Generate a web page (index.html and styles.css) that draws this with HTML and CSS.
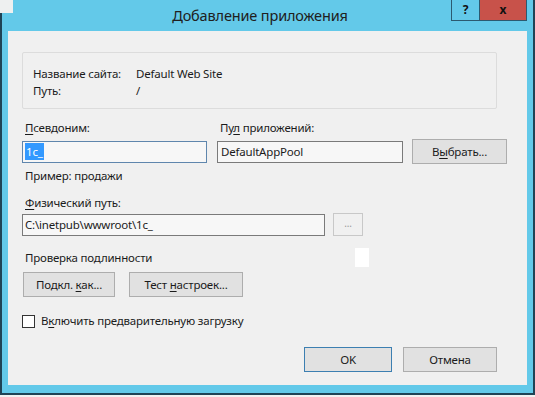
FILE: index.html
```html
<!DOCTYPE html>
<html lang="ru">
<head>
<meta charset="utf-8">
<title>Добавление приложения</title>
<link rel="stylesheet" href="styles.css">
</head>
<body>
<div class="window">
  <div class="titlebar">
    <div class="corner"></div>
    <div class="title">Добавление приложения</div>
    <div class="caption-btn help">?</div>
    <div class="caption-btn close">x</div>
  </div>
  <div class="client">
    <div class="group">
      <div class="g-label">Название сайта:</div><div class="g-value">Default Web Site</div>
      <div class="g-label">Путь:</div><div class="g-value">/</div>
    </div>

    <div class="row labels-row">
      <div class="label col-alias"><u>П</u>севдоним:</div>
      <div class="label col-pool">Пу<u>л</u> приложений:</div>
    </div>
    <div class="row inputs-row">
      <div class="input alias focused"><span class="sel">1c_</span></div>
      <div class="input pool">DefaultAppPool</div>
      <div class="btn choose">В<u>ы</u>брать...</div>
    </div>
    <div class="label example">Пример: продажи</div>

    <div class="label phys"><u>Ф</u>изический путь:</div>
    <div class="row path-row">
      <div class="input path">C:\inetpub\wwwroot\1c_</div>
      <div class="btn browse">...</div>
    </div>

    <div class="row auth-row">
      <div class="label auth">Проверка подлинности</div>
      <div class="blank"></div>
    </div>
    <div class="row auth-btns">
      <div class="btn connect">Подкл. <u>к</u>ак...</div>
      <div class="btn test">Тест <u>н</u>астроек...</div>
    </div>

    <div class="row check-row">
      <div class="checkbox"></div>
      <div class="check-label">В<u>к</u>лючить предварительную загрузку</div>
    </div>

    <div class="row footer">
      <div class="btn ok">OK</div>
      <div class="btn cancel">Отмена</div>
    </div>
  </div>
</div>
</body>
</html>
```

FILE: styles.css
```css
* { box-sizing: border-box; }
html, body { margin: 0; padding: 0; }
body {
  background: #f2f2f2;
  font-family: "Noto Sans", "Open Sans", sans-serif;
  font-size: 11.5px;
  letter-spacing: -0.2px;
  color: #1b1b1b;
  width: 535px;
  height: 397px;
  overflow: hidden;
}
u { text-decoration: underline; text-underline-offset: 2px; }

.window {
  width: 535px;
  height: 395px;
  background: #63c9e9;
  border: 2px solid #1f4355;
  border-top: none;
  padding: 0 6px 8px 6px;
  display: flex;
  flex-direction: column;
}

.titlebar {
  height: 31px;
  margin: 0 -6px;
  display: flex;
  align-items: flex-start;
  position: relative;
}
.corner {
  position: absolute;
  left: -2px;
  top: 0;
  width: 13px;
  height: 13px;
  background: #eef0f0;
}
.title {
  flex: 1;
  padding-left: 67px;
  text-align: center;
  font-size: 14.5px;
  letter-spacing: -0.15px;
  line-height: 31px;
  color: #202020;
}
.caption-btn {
  height: 21px;
  font-weight: bold;
  font-size: 12px;
  letter-spacing: 0;
  line-height: 19px;
  text-align: center;
  color: #111;
  border: 1px solid #2c5a70;
  border-top: none;
}
.help { width: 28px; background: #63c9e9; border-right: none; }
.close { width: 48px; background: #c8524a; margin-right: 6px; }

.client {
  flex: 1;
  background: #f0f0f0;
  padding: 21px 0 0 14px;
  display: flex;
  flex-direction: column;
}

.group {
  width: 475px;
  height: 57px;
  border: 1px solid #dcdcdc;
  border-radius: 2px;
  display: grid;
  grid-template-columns: 103px auto;
  grid-auto-rows: 17px;
  align-content: start;
  padding: 12px 0 0 10px;
  line-height: 17px;
}

.row { display: flex; align-items: center; }
.label { line-height: 16px; padding-left: 3px; }

.labels-row { margin-top: 11px; }
.col-alias { width: 195px; }
.inputs-row { margin-top: 3px; height: 25px; }

.input {
  height: 22px;
  border: 1px solid #7a7a7a;
  background: #f7f7f7;
  line-height: 20px;
  padding-left: 2px;
  white-space: nowrap;
  color: #1b1b1b;
}
.alias { width: 185px; border-color: #5f86ad; }
.sel { background: #3399ff; color: #fff; padding: 1px 1px; }
.pool { width: 186px; margin-left: 10px; padding-left: 3px; }

.btn {
  height: 25px;
  border: 1px solid #adadad;
  background: #e1e1e1;
  text-align: center;
  line-height: 23px;
  color: #1b1b1b;
}
.choose { width: 95px; margin-left: 9px; }

.example { margin-top: 4px; }
.phys { margin-top: 11px; }
.path-row { margin-top: 2px; }
.path { width: 303px; }
.browse {
  width: 30px;
  height: 23px;
  margin-left: 8px;
  background: #f0f0f0;
  border-color: #c8c8c8;
  color: #9a9a9a;
  line-height: 19px;
  font-size: 10px;
}

.auth-row { margin-top: 12px; height: 19px; }
.auth { width: 333px; }
.blank { width: 14px; height: 19px; background: #fff; }

.auth-btns { margin-top: 5px; margin-left: 1px; }
.connect { width: 92px; }
.test { width: 114px; margin-left: 14px; }

.check-row { margin-top: 16px; }
.checkbox {
  width: 13px;
  height: 13px;
  border: 1px solid #333;
  background: #fff;
}
.check-label { margin-left: 6px; line-height: 16px; }

.footer { margin-top: 18px; padding-left: 282px; }
.ok { width: 88px; border-color: #3c7fb1; }
.cancel { width: 94px; margin-left: 11px; }
```
